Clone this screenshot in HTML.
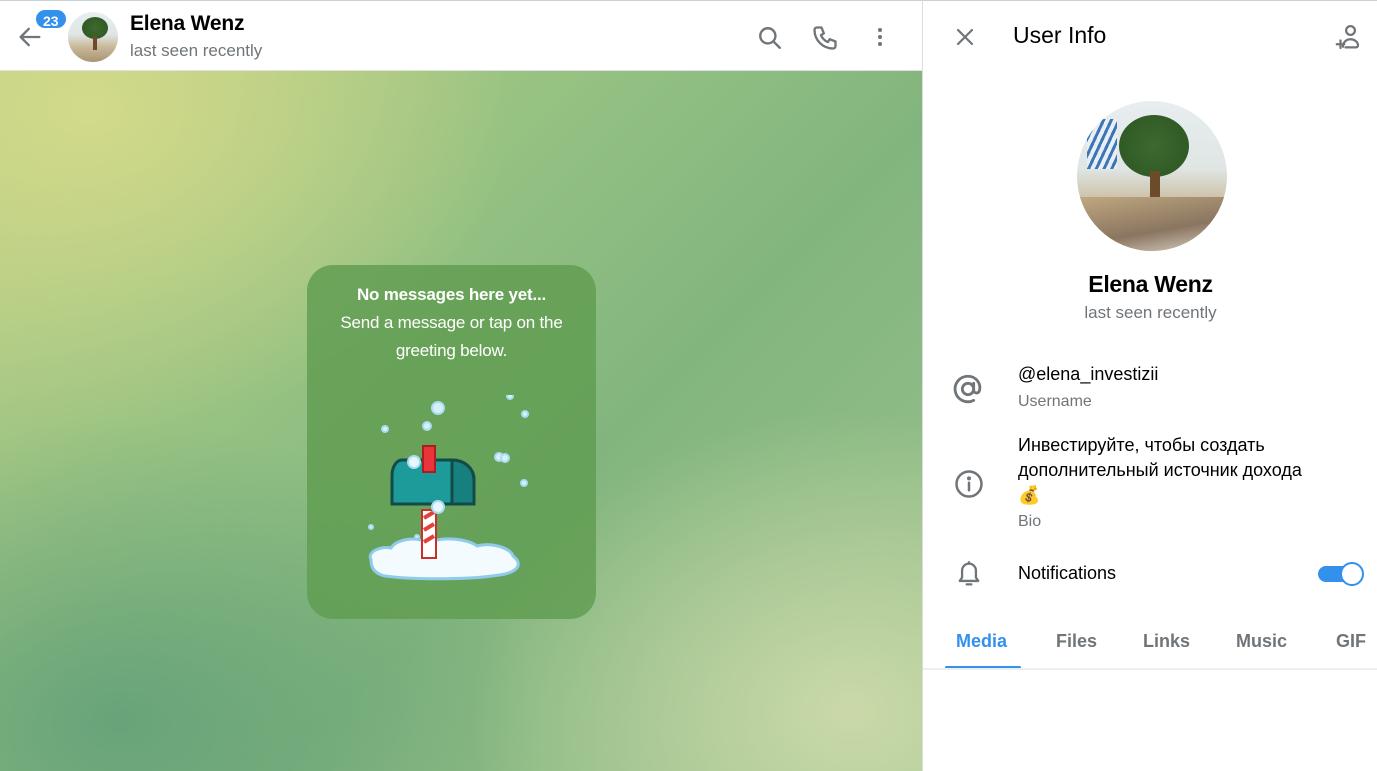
<!DOCTYPE html>
<html><head><meta charset="utf-8"><style>
*{margin:0;padding:0;box-sizing:border-box}
body{width:1377px;height:771px;overflow:hidden;font-family:"Liberation Sans","Noto Sans CJK SC",sans-serif;background:#fff;position:relative}
.chat{position:absolute;left:0;top:0;width:922px;height:771px;overflow:hidden}
.bg{position:absolute;left:0;top:71px;width:922px;height:700px;
background:
radial-gradient(ellipse 420px 320px at 90px 40px,rgba(212,218,138,0.95),rgba(212,218,138,0) 100%),
radial-gradient(ellipse 380px 300px at 850px 640px,rgba(205,218,170,0.95),rgba(205,218,170,0) 100%),
radial-gradient(ellipse 420px 300px at 120px 650px,rgba(100,160,120,0.9),rgba(100,160,120,0) 100%),
linear-gradient(135deg,#b9cf86 0%,#92c082 40%,#82b57e 60%,#9cc38e 100%)}
.hdr{position:absolute;left:0;top:0;width:922px;height:71px;background:#fff;border-top:1px solid #c9d0d6;border-bottom:1px solid #e0e0e0}
.av{position:absolute;border-radius:50%;overflow:hidden;background:linear-gradient(180deg,#e8eef0 0%,#dfe6e4 45%,#c9b89a 70%,#a89472 100%)}
.tree{position:absolute;border-radius:50%;background:radial-gradient(circle at 50% 50%,#3d6a2e,#2c5422)}
.badge{position:absolute;left:34px;top:7px;background:#3390ec;color:#fff;font-size:14px;font-weight:bold;border-radius:11px;height:22px;padding:0 7px;line-height:22px;border:2px solid #fff}
.panel{position:absolute;left:307px;top:265px;width:289px;height:354px;background:rgba(98,158,82,0.85);border-radius:26px;color:#fff;text-align:center;font-size:17px;line-height:28px;letter-spacing:-0.2px}
.side{position:absolute;left:922px;top:0;width:455px;height:771px;background:#fff;border-left:1px solid #dadce0;border-top:1px solid #c9d0d6}
.g{color:#707579}
.ic{position:absolute}
</style></head><body>
<div class="chat">
<div class="bg"></div>
<div class="hdr">
<svg class="ic" style="left:16px;top:22px" width="28" height="28" viewBox="0 0 24 24" fill="none" stroke="#707579" stroke-width="2" stroke-linecap="round" stroke-linejoin="round"><path d="M20 12H4M11 5l-7 7 7 7"/></svg>
<div class="av" style="left:68px;top:11px;width:50px;height:50px"><div class="tree" style="left:14px;top:5px;width:26px;height:22px"></div><div style="position:absolute;left:25px;top:24px;width:4px;height:14px;background:#6b4b2a"></div></div>
<div class="badge">23</div>
<div style="position:absolute;left:130px;top:11px;font-size:21px;font-weight:bold;color:#000;letter-spacing:-0.2px">Elena Wenz</div>
<div style="position:absolute;left:130px;top:40px;font-size:17px" class="g">last seen recently</div>
<svg class="ic" style="left:757px;top:24px" width="26" height="26" viewBox="0 0 24 24" fill="none" stroke="#707579" stroke-width="2.2" stroke-linecap="round"><circle cx="10" cy="10" r="7"/><path d="M15.5 15.5L21 21"/></svg>
<svg class="ic" style="left:811px;top:23px" width="28" height="28" viewBox="0 0 24 24" fill="none" stroke="#707579" stroke-width="2" stroke-linejoin="round"><path d="M5 3h4l2 5-2.5 1.5a11 11 0 0 0 6 6L16 13l5 2v4a2 2 0 0 1-2 2A16 16 0 0 1 3 5a2 2 0 0 1 2-2z"/></svg>
<svg class="ic" style="left:868px;top:24px" width="24" height="24" viewBox="0 0 24 24" fill="#707579"><circle cx="12" cy="5" r="2"/><circle cx="12" cy="12" r="2"/><circle cx="12" cy="19" r="2"/></svg>
</div>
<div class="panel">
<div style="font-weight:bold;margin-top:16px">No messages here yet...</div>
<div>Send a message or tap on the<br>greeting below.</div>
<svg style="position:absolute;left:50px;top:130px" width="180" height="190" viewBox="350 395 180 190">
<g fill="#d8f0fb" stroke="#a9dcf0" stroke-width="2">
<circle cx="431" cy="408" r="6"/><circle cx="420" cy="426" r="4"/><circle cx="378" cy="429" r="3"/><circle cx="503" cy="396" r="3"/><circle cx="518" cy="414" r="3"/><circle cx="492" cy="457" r="4"/><circle cx="498" cy="458" r="4"/><circle cx="517" cy="483" r="3"/><circle cx="364" cy="527" r="2"/><circle cx="410" cy="537" r="2"/></g>
<path d="M364 560c-4-8 8-14 20-12 6-10 30-12 36-4 10-8 40-6 50 2 14-4 34 2 36 10 8 6 8 14-8 18-30 6-90 6-120 2-10-2-14-8-14-16z" fill="#f3fbff" stroke="#8fcbea" stroke-width="3"/>
<rect x="415" y="510" width="14" height="48" fill="#fff" stroke="#c9302c" stroke-width="2"/>
<path d="M417 518l10-6M417 530l10-6M417 542l10-6" stroke="#e2413a" stroke-width="4"/>
<path d="M395 460h50c12 0 22 8 22 20v24h-82v-28c0-10 5-16 10-16z" fill="#1d9a9a" stroke="#134a4a" stroke-width="3"/>
<path d="M445 460c12 0 22 8 22 20v24h-22z" fill="#17807f" stroke="#134a4a" stroke-width="3"/>
<rect x="416" y="446" width="12" height="26" fill="#e8343a" stroke="#a81e22" stroke-width="2"/>
<circle cx="407" cy="462" r="6" fill="#e8f7fd" stroke="#a9dcf0" stroke-width="2"/><circle cx="431" cy="507" r="6" fill="#e8f7fd" stroke="#a9dcf0" stroke-width="2"/>
</svg>
</div>
</div>
<div class="side">
<svg class="ic" style="left:30px;top:24px" width="24" height="24" viewBox="0 0 24 24" fill="none" stroke="#707579" stroke-width="2.2" stroke-linecap="round"><path d="M5 5l14 14M19 5L5 19"/></svg>
<div style="position:absolute;left:90px;top:21px;font-size:23px;color:#000">User Info</div>
<svg class="ic" style="left:410px;top:22px" width="30" height="30" viewBox="0 0 24 24" fill="none" stroke="#707579" stroke-width="1.8" stroke-linecap="round"><circle cx="14" cy="6" r="3.5"/><path d="M8 19c0-4 3-6 6-6s6 2 6 5c0 1-1 1.5-2 1.5h-8M3 17h6M6 14v6"/></svg>
<div class="av" style="left:154px;top:100px;width:150px;height:150px"><div style="position:absolute;left:10px;top:18px;width:30px;height:50px;background:repeating-linear-gradient(115deg,#3a76b8 0 3px,#e8eef4 3px 7px)"></div><div class="tree" style="left:42px;top:14px;width:70px;height:62px"></div><div style="position:absolute;left:73px;top:70px;width:10px;height:30px;background:#6b4b2a"></div><div style="position:absolute;left:0;top:96px;width:150px;height:54px;background:linear-gradient(170deg,#c0a880,#8a7560 60%,#dcd4c6)"></div></div>
<div style="position:absolute;left:0;width:455px;text-align:center;top:270px;font-size:23px;font-weight:bold;color:#000;letter-spacing:-0.3px">Elena Wenz</div>
<div style="position:absolute;left:0;width:455px;text-align:center;top:302px;font-size:17px" class="g">last seen recently</div>
<svg class="ic" style="left:28px;top:371px" width="34" height="34" viewBox="0 0 24 24" fill="none" stroke="#707579" stroke-width="2" stroke-linecap="round"><circle cx="12" cy="12" r="4"/><path d="M16 8v5c0 2 3 2.5 4 0.5 1.5-5-2-10.5-8-10.5a9 9 0 1 0 4 17"/></svg>
<div style="position:absolute;left:95px;top:363px;font-size:18px;color:#000">@elena_investizii</div>
<div style="position:absolute;left:95px;top:392px;font-size:16px" class="g">Username</div>
<svg class="ic" style="left:31px;top:468px" width="30" height="30" viewBox="0 0 24 24" fill="none" stroke="#707579" stroke-width="2" stroke-linecap="round"><circle cx="12" cy="12" r="10"/><path d="M12 11v6"/><circle cx="12" cy="7.5" r="0.6" fill="#707579"/></svg>
<div style="position:absolute;left:95px;top:432px;font-size:18px;line-height:25px;color:#000">Инвестируйте, чтобы создать<br>дополнительный источник дохода<br><span style="font-size:18px">💰</span></div>
<div style="position:absolute;left:95px;top:512px;font-size:16px" class="g">Bio</div>
<svg class="ic" style="left:32px;top:558px" width="28" height="30" viewBox="0 0 24 26" fill="none" stroke="#707579" stroke-width="2" stroke-linejoin="round"><path d="M4 19h16l-2-3v-6a6 6 0 0 0-12 0v6z"/><path d="M10 22h4" stroke-linecap="round"/><path d="M12 2v2"/></svg>
<div style="position:absolute;left:95px;top:562px;font-size:18px;color:#000">Notifications</div>
<div style="position:absolute;left:395px;top:565px;width:38px;height:16px;border-radius:8px;background:#3390ec"></div>
<div style="position:absolute;left:417px;top:561px;width:24px;height:24px;border-radius:50%;background:#fff;border:2px solid #3390ec"></div>
<div style="position:absolute;top:630px;left:33px;font-size:18px;font-weight:bold;color:#3390ec">Media</div>
<div style="position:absolute;top:630px;left:133px;font-size:18px;font-weight:bold" class="g">Files</div>
<div style="position:absolute;top:630px;left:220px;font-size:18px;font-weight:bold" class="g">Links</div>
<div style="position:absolute;top:630px;left:313px;font-size:18px;font-weight:bold" class="g">Music</div>
<div style="position:absolute;top:630px;left:413px;font-size:18px;font-weight:bold" class="g">GIF</div>
<div style="position:absolute;top:665px;left:22px;width:76px;height:3px;border-radius:2px;background:#3390ec"></div>
<div style="position:absolute;top:667px;left:0;width:455px;height:2px;background:#eceef0"></div>
</div>
</body></html>
